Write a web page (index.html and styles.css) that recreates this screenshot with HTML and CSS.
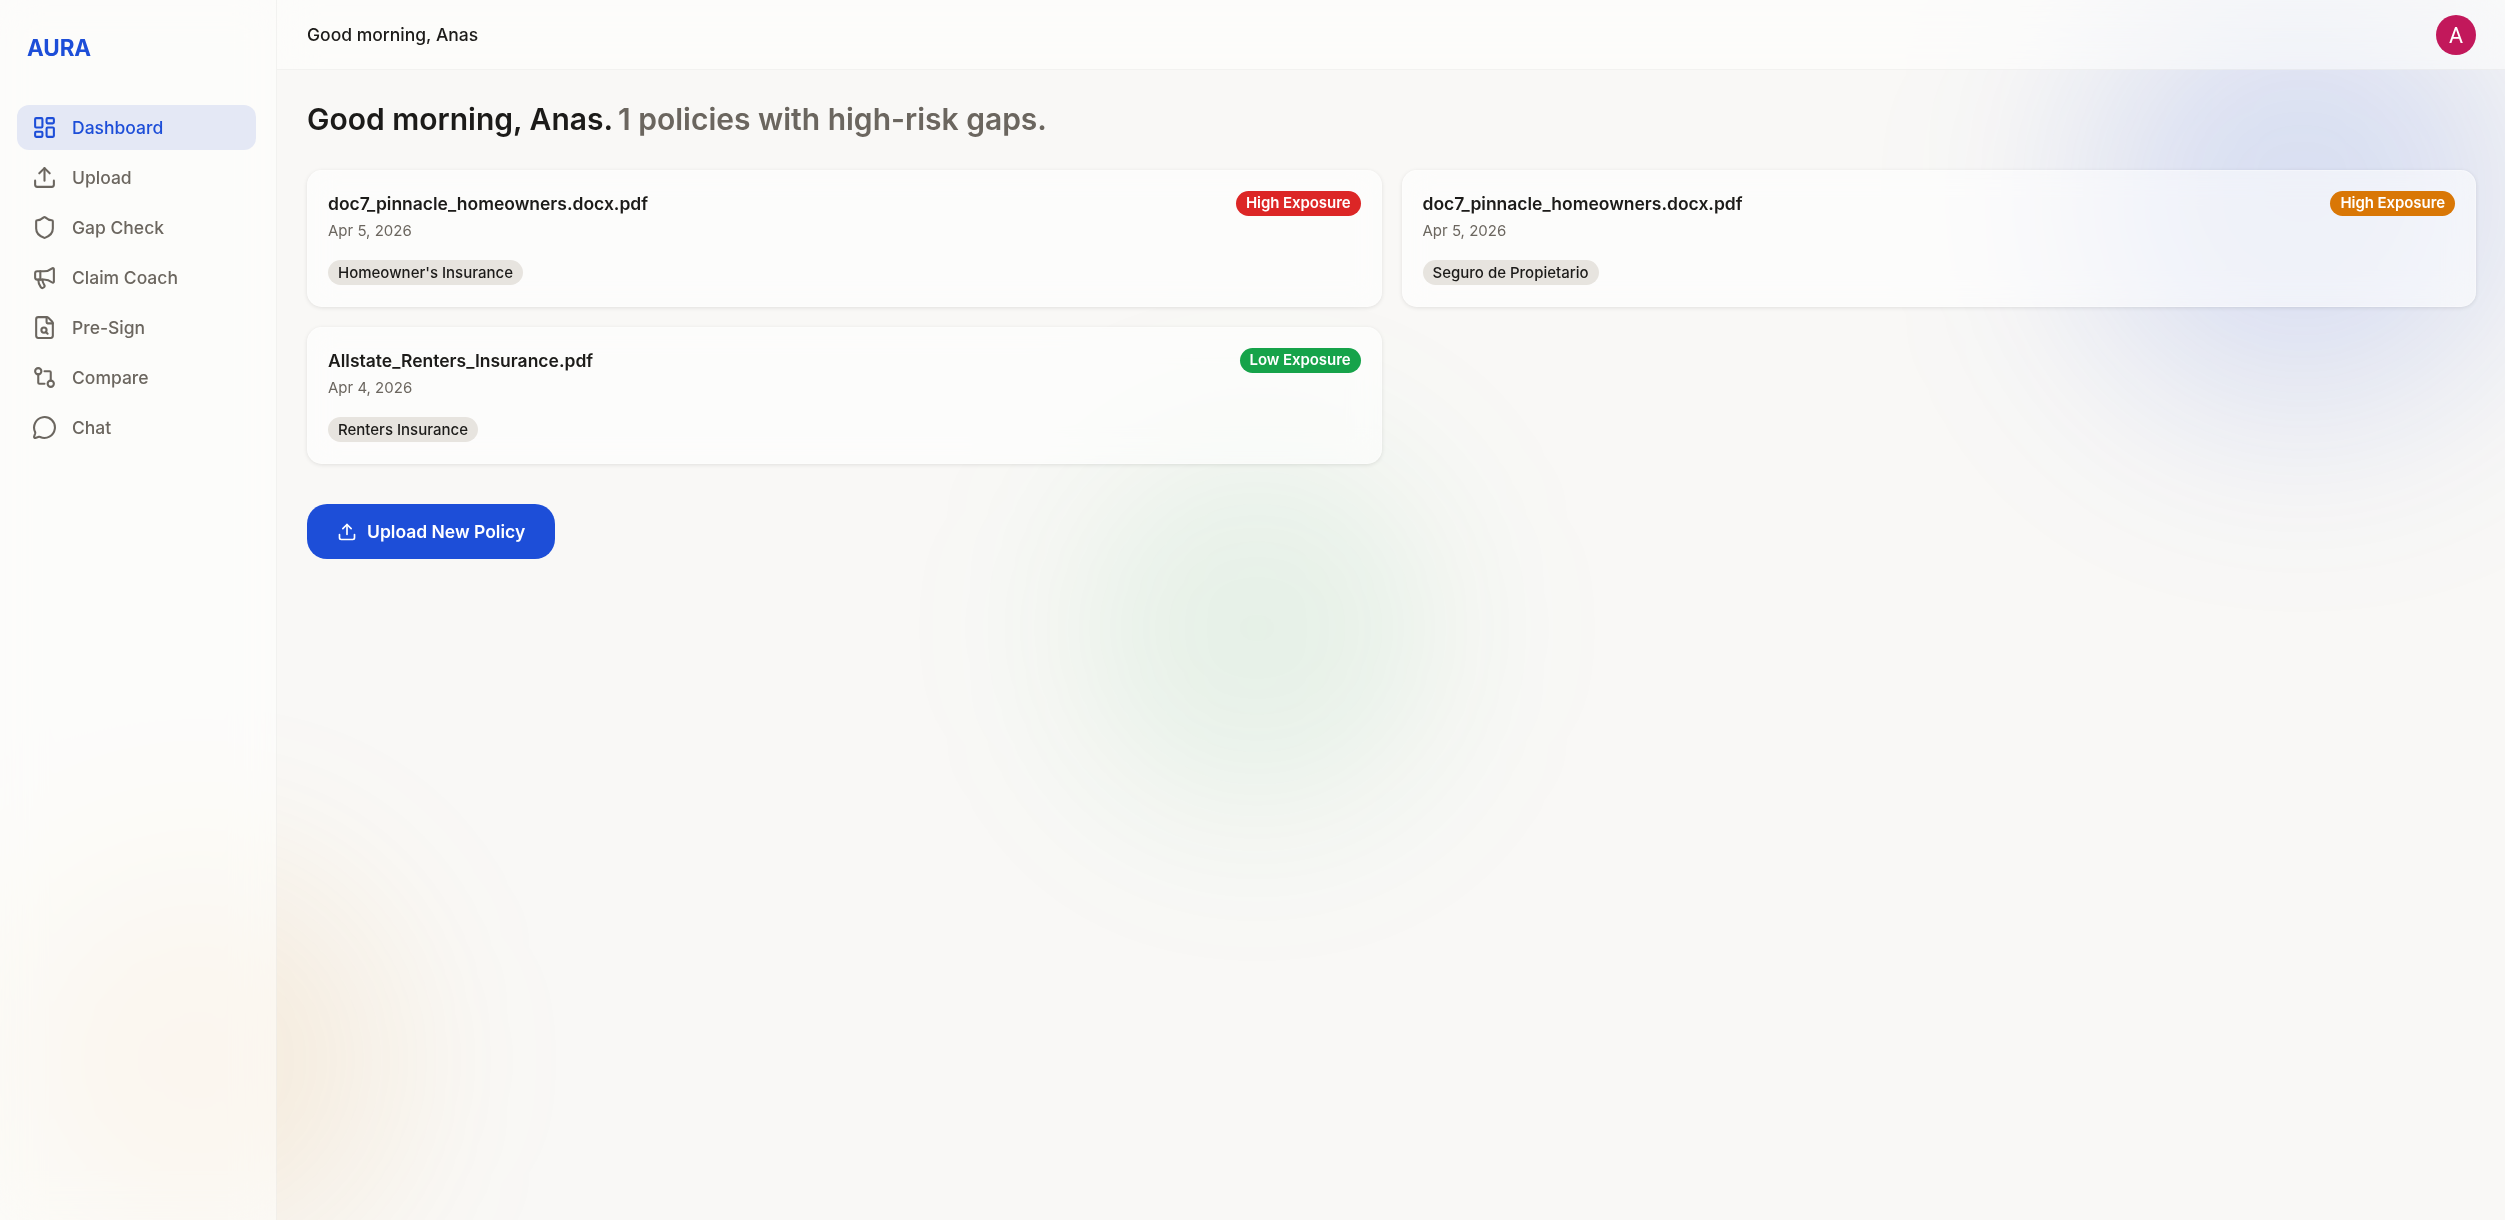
FILE: index.html
```html
<!DOCTYPE html>
<html lang="en">
<head>
  <meta charset="UTF-8">
  <meta name="viewport" content="width=device-width, initial-scale=1.0">
  <title>AURA - Dashboard</title>
  <link rel="stylesheet" href="styles.css">
</head>
<body>
  <div class="blobs">
    <div class="blob blob-blue"></div>
    <div class="blob blob-green"></div>
    <div class="blob blob-orange"></div>
  </div>

  <div class="app">
    <aside class="sidebar">
      <div class="logo">AURA</div>
      <nav class="nav">
        <a class="nav-item active">
          <svg class="icon" viewBox="0 0 24 24"><rect width="7" height="9" x="3" y="3" rx="1"/><rect width="7" height="5" x="14" y="3" rx="1"/><rect width="7" height="9" x="14" y="12" rx="1"/><rect width="7" height="5" x="3" y="16" rx="1"/></svg>
          <span>Dashboard</span>
        </a>
        <a class="nav-item">
          <svg class="icon" viewBox="0 0 24 24"><path d="M12 3v12"/><path d="m17 8-5-5-5 5"/><path d="M21 15v4a2 2 0 0 1-2 2H5a2 2 0 0 1-2-2v-4"/></svg>
          <span>Upload</span>
        </a>
        <a class="nav-item">
          <svg class="icon" viewBox="0 0 24 24"><path d="M20 13c0 5-3.5 7.5-7.66 8.95a1 1 0 0 1-.67-.01C7.5 20.5 4 18 4 13V6a1 1 0 0 1 1-1c2 0 4.5-1.2 6.24-2.72a1.17 1.17 0 0 1 1.52 0C14.51 3.81 17 5 19 5a1 1 0 0 1 1 1z"/></svg>
          <span>Gap Check</span>
        </a>
        <a class="nav-item">
          <svg class="icon" viewBox="0 0 24 24"><path d="M11 6a13 13 0 0 0 8.4-2.8A1 1 0 0 1 21 4v12a1 1 0 0 1-1.6.8A13 13 0 0 0 11 14H5a2 2 0 0 1-2-2V8a2 2 0 0 1 2-2z"/><path d="M6 14a12 12 0 0 0 2.4 7.2 2 2 0 0 0 3.2-2.4A8 8 0 0 1 10 14"/><path d="M8 6v8"/></svg>
          <span>Claim Coach</span>
        </a>
        <a class="nav-item">
          <svg class="icon" viewBox="0 0 24 24"><path d="M6 22a2 2 0 0 1-2-2V4a2 2 0 0 1 2-2h8a2.4 2.4 0 0 1 1.704.706l3.588 3.588A2.4 2.4 0 0 1 20 8v12a2 2 0 0 1-2 2z"/><path d="M14 2v5a1 1 0 0 0 1 1h5"/><circle cx="11.5" cy="14.5" r="2.5"/><path d="M13.3 16.3 15 18"/></svg>
          <span>Pre-Sign</span>
        </a>
        <a class="nav-item">
          <svg class="icon" viewBox="0 0 24 24"><circle cx="6" cy="6" r="3"/><circle cx="18" cy="18" r="3"/><path d="M12 6h5a1 1 0 0 1 1 1v8"/><path d="M12 18H7a1 1 0 0 1-1-1V9"/></svg>
          <span>Compare</span>
        </a>
        <a class="nav-item">
          <svg class="icon" viewBox="0 0 24 24"><path d="M2.992 16.342a2 2 0 0 1 .094 1.167l-1.065 3.29a1 1 0 0 0 1.236 1.168l3.413-.998a2 2 0 0 1 1.099.092 10 10 0 1 0-4.777-4.719"/></svg>
          <span>Chat</span>
        </a>
      </nav>
    </aside>

    <div class="main">
      <header class="topbar">
        <span class="greeting">Good morning, Anas</span>
        <div class="avatar">A</div>
      </header>

      <main class="content">
        <h1 class="title">Good morning, Anas. <span class="muted">1 policies with high-risk gaps.</span></h1>

        <div class="cards">
          <div class="card">
            <div class="card-head">
              <div>
                <div class="card-name">doc7_pinnacle_homeowners.docx.pdf</div>
                <div class="card-date">Apr 5, 2026</div>
              </div>
              <span class="badge red">High Exposure</span>
            </div>
            <span class="tag">Homeowner's Insurance</span>
          </div>

          <div class="card">
            <div class="card-head">
              <div>
                <div class="card-name">doc7_pinnacle_homeowners.docx.pdf</div>
                <div class="card-date">Apr 5, 2026</div>
              </div>
              <span class="badge orange">High Exposure</span>
            </div>
            <span class="tag">Seguro de Propietario</span>
          </div>

          <div class="card">
            <div class="card-head">
              <div>
                <div class="card-name">Allstate_Renters_Insurance.pdf</div>
                <div class="card-date">Apr 4, 2026</div>
              </div>
              <span class="badge green">Low Exposure</span>
            </div>
            <span class="tag">Renters Insurance</span>
          </div>
        </div>

        <button type="button" class="upload-btn">
          <svg class="icon" viewBox="0 0 24 24"><path d="M12 3v12"/><path d="m17 8-5-5-5 5"/><path d="M21 15v4a2 2 0 0 1-2 2H5a2 2 0 0 1-2-2v-4"/></svg>
          <span>Upload New Policy</span>
        </button>
      </main>
    </div>
  </div>
</body>
</html>
```
FILE: styles.css
```css
* {
  box-sizing: border-box;
}
body {
  margin: 0;
  font-family: Inter, sans-serif;
  font-size: 17.5px;
  color: #1c1b19;
  background: #f9f8f6;
  overflow: hidden;
}

/* soft background colours */
.blobs {
  position: fixed;
  inset: 0;
  overflow: hidden;
}
.blob {
  position: absolute;
  border-radius: 50%;
  filter: blur(90px);
}
.blob-blue {
  width: 440px;
  height: 440px;
  left: 2082px;
  top: -25px;
  background: rgba(29, 78, 216, 0.155);
  filter: blur(105px);
}
.blob-green {
  width: 360px;
  height: 360px;
  left: 1077px;
  top: 448px;
  background: rgba(22, 163, 74, 0.09);
}
.blob-orange {
  width: 390px;
  height: 390px;
  left: 3px;
  top: 865px;
  background: rgba(217, 130, 6, 0.105);
}

.app {
  position: relative;
  display: flex;
  height: 100vh;
}
.sidebar {
  width: 277px;
  padding: 34px 20px 0 17px;
  background: rgba(255, 255, 253, 0.55);
  backdrop-filter: blur(20px);
  border-right: 1px solid rgba(0, 0, 0, 0.04);
}
.logo {
  padding-left: 10px;
  font-size: 22.5px;
  line-height: 27px;
  font-weight: 700;
  letter-spacing: -0.1px;
  color: #1d4ed8;
}
.nav {
  display: flex;
  flex-direction: column;
  gap: 5px;
  margin-top: 44px;
}
.nav-item {
  display: flex;
  align-items: center;
  gap: 15px;
  height: 45px;
  padding: 0 15px;
  border-radius: 12px;
  font-weight: 500;
  color: #6b665f;
}
.nav-item.active {
  background: #e4e8f5;
  color: #1d4ed8;
}
.icon {
  width: 25px;
  height: 25px;
  fill: none;
  stroke: currentColor;
  stroke-width: 2;
  stroke-linecap: round;
  stroke-linejoin: round;
}

.main {
  flex: 1;
}
.topbar {
  display: flex;
  align-items: center;
  justify-content: space-between;
  height: 70px;
  padding: 0 29px 0 30px;
  background: rgba(255, 255, 253, 0.55);
  backdrop-filter: blur(20px);
  border-bottom: 1px solid rgba(0, 0, 0, 0.04);
}
.greeting {
  font-weight: 500;
}
.avatar {
  width: 40px;
  height: 40px;
  border-radius: 50%;
  background: #c2185b;
  color: white;
  font-family: Roboto, sans-serif;
  font-size: 21.5px;
  line-height: 41px;
  text-align: center;
}
.content {
  padding: 29px 29px 0 30px;
}
.title {
  margin: 0 0 31px;
  font-size: 30px;
  line-height: 40px;
  font-weight: 600;
}
.muted {
  margin-left: -2px;
  color: #6b665f;
}

.cards {
  display: grid;
  grid-template-columns: 1fr 1fr;
  gap: 20px;
}
.card {
  height: 137px;
  padding: 20px;
  border: 1px solid rgba(255, 255, 255, 0.3);
  border-radius: 15px;
  background: rgba(255, 255, 255, 0.57);
  backdrop-filter: blur(15px);
  box-shadow: 0 1px 4px rgba(0, 0, 0, 0.1);
}
.card-head {
  display: flex;
  justify-content: space-between;
  align-items: flex-start;
  height: 69px;
}
.card-name {
  font-weight: 600;
  line-height: 25px;
}
.card-date {
  font-size: 15px;
  line-height: 20px;
  margin-top: 5px;
  color: #6b665f;
}
.badge, .tag {
  display: inline-block;
  height: 25px;
  padding: 0 10px;
  border-radius: 12.5px;
  font-size: 15px;
  line-height: 25px;
}
.badge {
  font-weight: 600;
  letter-spacing: -0.07px;
  line-height: 24px;
  color: white;
}
.red {
  background: #dc2626;
}
.orange {
  background: #d97706;
}
.green {
  background: #16a34a;
}
.tag {
  font-weight: 500;
  background: #e7e4df;
}

.upload-btn {
  display: flex;
  align-items: center;
  gap: 10px;
  height: 55px;
  margin-top: 40px;
  padding: 0 30px;
  border: none;
  border-radius: 20px;
  background: #1d4ed8;
  color: white;
  font-family: inherit;
  font-size: 17.5px;
  font-weight: 600;
}
.upload-btn .icon {
  width: 20px;
  height: 20px;
}
```
